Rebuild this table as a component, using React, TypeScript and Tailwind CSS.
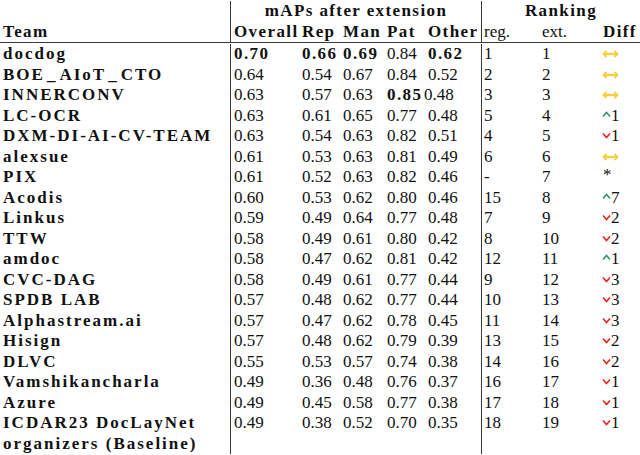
import * as React from "react";

type Diff = { kind: "same" } | { kind: "up"; n: number } | { kind: "down"; n: number } | { kind: "new" };

type Row = {
  team: React.ReactNode;
  vals: string[];
  bold?: number[];
  reg: string;
  ext: string;
  diff: Diff;
};

const same: Diff = { kind: "same" };
const up = (n: number): Diff => ({ kind: "up", n });
const down = (n: number): Diff => ({ kind: "down", n });

// wider underscore, like LaTeX's \_
const U = () => <span className="px-[2px]">_</span>;

const rows: Row[] = [
  { team: "docdog", vals: ["0.70", "0.66", "0.69", "0.84", "0.62"], bold: [0, 1, 2, 4], reg: "1", ext: "1", diff: same },
  {
    team: (
      <>
        BOE<U />AIoT<U />CTO
      </>
    ),
    vals: ["0.64", "0.54", "0.67", "0.84", "0.52"],
    reg: "2",
    ext: "2",
    diff: same,
  },
  { team: "INNERCONV", vals: ["0.63", "0.57", "0.63", "0.85", "0.48"], bold: [3], reg: "3", ext: "3", diff: same },
  { team: "LC-OCR", vals: ["0.63", "0.61", "0.65", "0.77", "0.48"], reg: "5", ext: "4", diff: up(1) },
  { team: "DXM-DI-AI-CV-TEAM", vals: ["0.63", "0.54", "0.63", "0.82", "0.51"], reg: "4", ext: "5", diff: down(1) },
  { team: "alexsue", vals: ["0.61", "0.53", "0.63", "0.81", "0.49"], reg: "6", ext: "6", diff: same },
  { team: "PIX", vals: ["0.61", "0.52", "0.63", "0.82", "0.46"], reg: "-", ext: "7", diff: { kind: "new" } },
  { team: "Acodis", vals: ["0.60", "0.53", "0.62", "0.80", "0.46"], reg: "15", ext: "8", diff: up(7) },
  { team: "Linkus", vals: ["0.59", "0.49", "0.64", "0.77", "0.48"], reg: "7", ext: "9", diff: down(2) },
  { team: "TTW", vals: ["0.58", "0.49", "0.61", "0.80", "0.42"], reg: "8", ext: "10", diff: down(2) },
  { team: "amdoc", vals: ["0.58", "0.47", "0.62", "0.81", "0.42"], reg: "12", ext: "11", diff: up(1) },
  { team: "CVC-DAG", vals: ["0.58", "0.49", "0.61", "0.77", "0.44"], reg: "9", ext: "12", diff: down(3) },
  { team: "SPDB LAB", vals: ["0.57", "0.48", "0.62", "0.77", "0.44"], reg: "10", ext: "13", diff: down(3) },
  { team: "Alphastream.ai", vals: ["0.57", "0.47", "0.62", "0.78", "0.45"], reg: "11", ext: "14", diff: down(3) },
  { team: "Hisign", vals: ["0.57", "0.48", "0.62", "0.79", "0.39"], reg: "13", ext: "15", diff: down(2) },
  { team: "DLVC", vals: ["0.55", "0.53", "0.57", "0.74", "0.38"], reg: "14", ext: "16", diff: down(2) },
  { team: "Vamshikancharla", vals: ["0.49", "0.36", "0.48", "0.76", "0.37"], reg: "16", ext: "17", diff: down(1) },
  { team: "Azure", vals: ["0.49", "0.45", "0.58", "0.77", "0.38"], reg: "17", ext: "18", diff: down(1) },
  {
    team: (
      <>
        ICDAR23 DocLayNet
        <br />
        organizers (Baseline)
      </>
    ),
    vals: ["0.49", "0.38", "0.52", "0.70", "0.35"],
    reg: "18",
    ext: "19",
    diff: down(1),
  },
];

const grid = "grid grid-cols-[230px_72px_41px_44px_41px_53px_61px_60px_38px] leading-[20.5px]";
const bold = "font-bold tracking-[1.4px]";
const teamBold = "font-bold tracking-[2px]";
const rule = "border-l border-[#3a3a3a]";

function SameArrow() {
  return (
    <svg width="17" height="8" viewBox="0 0 17 8" className="mt-[6px]">
      <line x1="2" y1="4" x2="15" y2="4" stroke="#f7cf3c" strokeWidth="2.4" />
      <polyline points="4.5,1 1.5,4 4.5,7" fill="none" stroke="#f7cf3c" strokeWidth="1.8" />
      <polyline points="12.5,1 15.5,4 12.5,7" fill="none" stroke="#f7cf3c" strokeWidth="1.8" />
    </svg>
  );
}

function DiffCell({ d }: { d: Diff }) {
  if (d.kind === "same") return <SameArrow />;
  if (d.kind === "new") return <span className="block pl-[1px] leading-[16px]">*</span>;
  const isUp = d.kind === "up";
  return (
    <span className="flex items-start">
      <svg width="9" height="7" viewBox="0 0 9 7" className={isUp ? "mt-[5px]" : "mt-[6px]"}>
        <polyline
          points={isUp ? "1,5.5 4.5,1.5 8,5.5" : "1,1.5 4.5,5.5 8,1.5"}
          fill="none"
          stroke={isUp ? "#2f9763" : "#f0201e"}
          strokeWidth="1.6"
        />
      </svg>
      <span>{d.n}</span>
    </span>
  );
}

export default function App() {
  return (
    <div className="w-[640px] h-[455px] pt-[1px] bg-white text-[#111] text-[17px] [font-family:'Liberation_Serif',serif] overflow-hidden">
      {/* header */}
      <div className={grid}>
        <div />
        <div className={`col-span-5 text-center ${rule} ${bold}`}>mAPs after extension</div>
        <div className={`col-span-3 text-center ${rule} ${bold}`}>Ranking</div>
      </div>
      <div className={`${grid} border-b border-[#3a3a3a]`}>
        <div className={`pl-[3px] ${bold}`}>Team</div>
        <div className={`pl-[3px] ${rule} ${bold}`}>Overall</div>
        <div className={bold}>Rep</div>
        <div className={bold}>Man</div>
        <div className={bold}>Pat</div>
        <div className={bold}>Other</div>
        <div className={`pl-[2px] ${rule}`}>reg.</div>
        <div>ext.</div>
        <div className={`pl-[1px] ${bold}`}>Diff</div>
      </div>

      {/* body */}
      <div className="pt-[1px]">
        {rows.map((r, i) => (
          <div key={i} className={grid}>
            <div className={`pl-[3px] whitespace-nowrap ${teamBold}`}>{r.team}</div>
            {r.vals.map((v, j) => (
              <div
                key={j}
                className={[
                  j === 0 ? `pl-[3px] ${rule}` : "",
                  r.bold?.includes(j) ? bold : "",
                  i === 2 && j === 4 ? "-ml-[4px]" : "",
                ].join(" ")}
              >
                {v}
              </div>
            ))}
            <div className={`pl-[2px] ${rule}`}>{r.reg}</div>
            <div>{r.ext}</div>
            <div>
              <DiffCell d={r.diff} />
            </div>
          </div>
        ))}
      </div>
    </div>
  );
}
